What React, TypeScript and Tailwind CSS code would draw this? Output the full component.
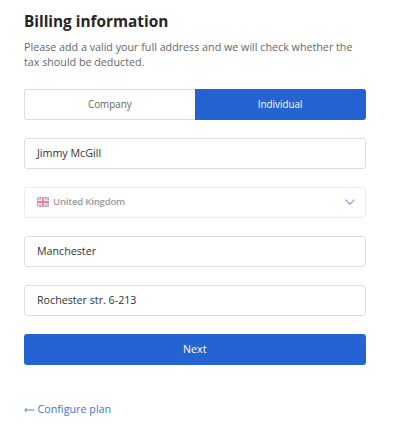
function Flag() {
  return (
    <svg className="h-[10px] w-3 opacity-65" viewBox="0 0 12 10">
      <path fill="#3554b5" d="M0 0h12v10H0z" />
      <path stroke="#fff" strokeWidth="2" d="M0 0l12 10M12 0L0 10" />
      <path stroke="#ed4c5c" strokeWidth="1" d="M0 0l12 10M12 0L0 10" />
      <path stroke="#fff" strokeWidth="3.4" d="M6 0v10M0 5h12" />
      <path stroke="#ed3c50" strokeWidth="1.8" d="M6 0v10M0 5h12" />
    </svg>
  );
}

function Field({ value }: { value: string }) {
  return (
    <div className="mt-[18px] flex h-[31px] items-center rounded-[3px] border border-[#dedede] px-3 text-[10.7px] text-[#333]">
      {value}
    </div>
  );
}

export default function App() {
  return (
    <main className="h-[444px] w-[400px] bg-white pl-6 pr-[34.5px] pt-[10px] font-['Open_Sans',sans-serif] text-[#222]">
      <h1 className="text-[15.35px] font-bold leading-[22px] text-[#262626]">Billing information</h1>
      <p className="mt-2 text-[10.73px] leading-[15px] text-[#666]">
        Please add a valid your full address and we will check whether the<br />tax should be deducted.
      </p>
      <div className="mt-[19px] grid h-[31px] grid-cols-2 text-[9.9px]">
        <button className="rounded-l-[3px] border border-r-0 border-[#dedede] text-[#666]">Company</button>
        <button className="rounded-r-[3px] bg-[#2463d1] text-white">Individual</button>
      </div>
      <Field value="Jimmy McGill" />
      <div className="mt-[18px] flex h-[31px] items-center rounded-[3px] border border-[#ededed] px-3 pb-px text-[9.6px] font-semibold tracking-[-0.2px] text-[#999]">
        <Flag />
        <span className="ml-1">United Kingdom</span>
        <svg className="ml-auto mr-[-2px] h-[6px] w-[10px]" viewBox="0 0 10 6" fill="none" stroke="#7ba1e3" strokeWidth="1.2">
          <path d="M.5.7L5 5.2 9.500.7" />
        </svg>
      </div>
      <Field value="Manchester" />
      <Field value="Rochester str. 6-213" />
      <button className="mt-[18px] block h-[31px] w-full rounded-[3px] bg-[#2463d1] text-[10.7px] text-white">Next</button>
      <a className="mt-[37px] flex items-center text-[10.75px] leading-[15px] text-[#3f74d6]">
        <svg className="mr-[3px] mt-px h-[6px] w-[10.5px]" viewBox="0 0 10.5 6" fill="none" stroke="currentColor" strokeWidth=".9">
          <path d="M10.500 3H.8M2.800 1L.8 3l2 2" />
        </svg>
        Configure plan
      </a>
    </main>
  );
}
